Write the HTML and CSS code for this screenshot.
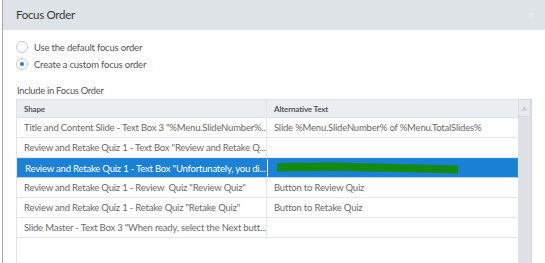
FILE: index.html
```html
<!DOCTYPE html>
<html>
<head>
<meta charset="utf-8">
<link rel="stylesheet" href="styles.css">
</head>
<body>
<div class="panel">
  <div class="titlebar">
    <span class="title">Focus Order</span>
    <span class="close">×</span>
  </div>
  <div class="content">
    <div class="options">
      <label class="opt"><span class="radio"></span>Use the default focus order</label>
      <label class="opt"><span class="radio checked"></span>Create a custom focus order</label>
    </div>
    <div class="section-label">Include in Focus Order</div>
    <div class="grid-wrap">
      <div class="grid">
        <div class="row head">
          <div class="cell">Shape</div>
          <div class="cell">Alternative Text</div>
        </div>
        <div class="row">
          <div class="cell">Title and Content Slide - Text Box 3 "%Menu.SlideNumber%...</div>
          <div class="cell">Slide %Menu.SlideNumber% of %Menu.TotalSlides%</div>
        </div>
        <div class="row">
          <div class="cell">Review and Retake Quiz 1 - Text Box "Review and Retake Q...</div>
          <div class="cell"></div>
        </div>
        <div class="row selected">
          <div class="cell">Review and Retake Quiz 1 - Text Box "Unfortunately, you di...</div>
          <div class="cell"><svg class="scribble" width="184" height="14" viewBox="0 0 184 14"><path d="M1 2 L60 1.5 L120 3 L182 4.5 L182 12.5 L120 11 L60 10 L1 10.5 Z" fill="#138a10"/></svg></div>
        </div>
        <div class="row">
          <div class="cell">Review and Retake Quiz 1 - Review &nbsp;Quiz "Review Quiz"</div>
          <div class="cell">Button to Review Quiz</div>
        </div>
        <div class="row">
          <div class="cell">Review and Retake Quiz 1 - Retake Quiz "Retake Quiz"</div>
          <div class="cell">Button to Retake Quiz</div>
        </div>
        <div class="row">
          <div class="cell">Slide Master - Text Box 3 "When ready, select the Next butt...</div>
          <div class="cell"></div>
        </div>
      </div>
      <div class="scrollbar">
        <div class="scroll-up"><svg width="7" height="5" viewBox="0 0 7 5"><path d="M3.5 0.5 L6.5 4.5 L0.5 4.5 Z" fill="#c3c8cd"/></svg></div>
      </div>
    </div>
  </div>
</div>
</body>
</html>
```
FILE: styles.css
```css
* { box-sizing: border-box; }
html, body { margin: 0; padding: 0; background: #fff; }
body {
  font-family: Lato, "Open Sans", sans-serif;
  width: 545px;
  height: 263px;
  overflow: hidden;
}
.panel {
  margin-left: 2px;
  border-left: 1px solid #a9a9a9;
  height: 263px;
}
.titlebar {
  height: 30px;
  background: #dee3e8;
  display: flex;
  align-items: center;
  justify-content: space-between;
  padding: 0 10px 1px 13px;
}
.title {
  font-size: 11.5px;
  letter-spacing: -0.3px;
  color: #3a3a3a;
}
.close {
  font-size: 13px;
  color: #e9ecef;
}
.content {
  padding: 11px 0 0 13px;
}
.options {
  display: flex;
  flex-direction: column;
  gap: 5px;
}
.opt {
  display: flex;
  align-items: center;
  gap: 6px;
  font-size: 9.5px;
  letter-spacing: -0.2px;
  color: #555;
  height: 12px;
}
.radio {
  width: 12px;
  height: 12px;
  border: 1px solid #c9cdd2;
  border-radius: 50%;
  background: #fff;
  display: flex;
  align-items: center;
  justify-content: center;
}
.radio.checked::after {
  content: "";
  width: 4px;
  height: 4px;
  border-radius: 50%;
  background: #1a7fd4;
}
.section-label {
  margin-top: 14px;
  font-size: 9.3px;
  letter-spacing: -0.25px;
  color: #555;
  padding-left: 1px;
  height: 13px;
  line-height: 13px;
}
.grid-wrap {
  display: flex;
  width: 516px;
  margin-top: 2px;
}
.grid {
  width: 502px;
  height: 170px;
  border: 1px solid #e1e5e9;
  border-right: none;
}
.row {
  display: grid;
  grid-template-columns: 250px 1fr;
  height: 20px;
  border-bottom: 1px solid #e3e7eb;
}
.row.head {
  height: 18px;
  background: #ebeef1;
  border-bottom: 1px solid #dde2e6;
}
.cell {
  font-size: 9.5px;
  letter-spacing: -0.2px;
  color: #6a6a6a;
  padding-left: 7px;
  display: flex;
  align-items: center;
  white-space: nowrap;
  overflow: hidden;
}
.cell:first-child {
  border-right: 1px solid #e3e7eb;
}
.head .cell {
  font-size: 8px;
  letter-spacing: -0.15px;
  font-weight: 700;
  color: #555;
}
.row.selected {
  background: #1a81d6;
  border: 1px solid #2a8be0;
  border-bottom-color: #b9d3ea;
}
.row.selected .cell {
  color: #fff;
}
.row.selected .cell:first-child {
  border-right-color: #ffffff;
}
.scribble {
  display: block;
  margin-left: 1px;
}
.scrollbar {
  width: 14px;
  height: 170px;
  background: #dee2e6;
  border-right: 1px solid #d3d7db;
}
.scroll-up {
  height: 18px;
  background: #e7eaed;
  border: 1px solid #d7dbdf;
  display: flex;
  align-items: center;
  justify-content: center;
}
```
